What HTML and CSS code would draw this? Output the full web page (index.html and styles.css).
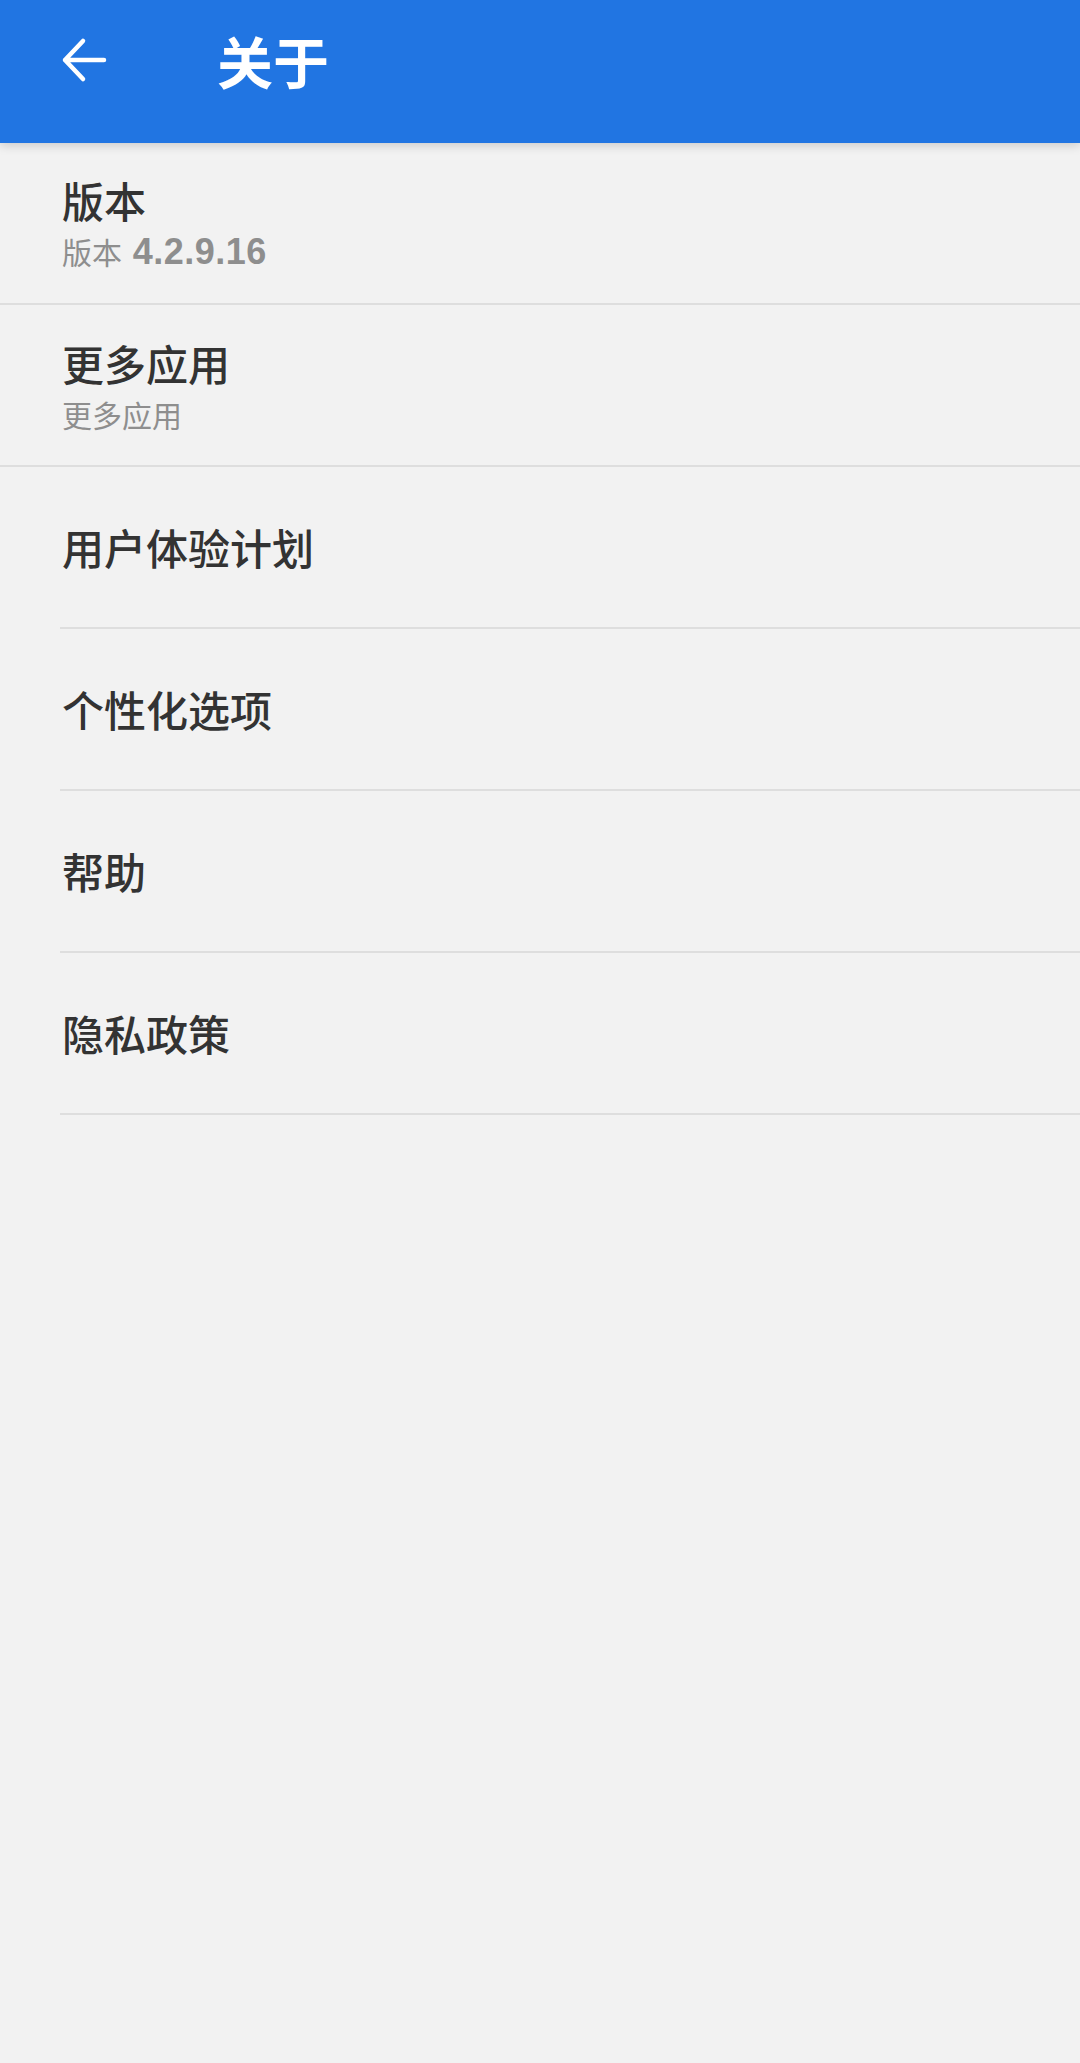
FILE: index.html
```html
<!DOCTYPE html>
<html lang="zh-CN">
<head>
  <meta charset="UTF-8" />
  <meta name="viewport" content="width=device-width, initial-scale=1" />
  <title>关于</title>
  <link rel="stylesheet" href="styles.css">
</head>
<body>
  <header class="appbar">
    <button class="back" aria-label="返回">
      <svg width="48" height="48" viewBox="0 0 48 48">
        <path d="M6 24 H45 M24 5 L6 24 L24 43" fill="none" stroke="#fff" stroke-width="4.5" stroke-linecap="round" stroke-linejoin="round"/>
      </svg>
    </button>
    <h1>关于</h1>
  </header>

  <ul class="list">
    <li class="item full">
      <div class="title">版本</div>
      <div class="sub">版本 <b>4.2.9.16</b></div>
    </li>
    <li class="item full">
      <div class="title">更多应用</div>
      <div class="sub">更多应用</div>
    </li>
    <li class="item">
      <div class="title">用户体验计划</div>
    </li>
    <li class="item">
      <div class="title">个性化选项</div>
    </li>
    <li class="item">
      <div class="title">帮助</div>
    </li>
    <li class="item">
      <div class="title">隐私政策</div>
    </li>
  </ul>
</body>
</html>
```

FILE: styles.css
```css
body {
  margin: 0;
  min-height: 2063px;
  background: #f2f2f2;
  font-family: "Noto Sans CJK SC", "Noto Sans", sans-serif;
  color: #333;
}
.appbar {
  display: flex;
  align-items: center;
  height: 143px;
  background: #2175e2;
  box-shadow: 0 2px 10px rgba(0, 0, 0, 0.18);
}
.back {
  display: flex;
  margin: 0 0 0 59px;
  padding: 0;
  border: 0;
  background: none;
  height: 48px;
  width: 48px;
  margin-top: -24px;
}
.appbar h1 {
  margin: -24px 0 0 110px;
  font-size: 56px;
  font-weight: bold;
  color: #fff;
}
.list {
  list-style: none;
  margin: 0;
  padding: 0;
}
.item {
  display: flex;
  flex-direction: column;
  justify-content: center;
  height: 160px;
  margin-left: 60px;
  padding-left: 2px;
  border-bottom: 2px solid #dedede;
}
.item.full {
  margin-left: 0;
  padding-left: 62px;
}
.title {
  font-size: 42px;
  line-height: 48px;
  font-weight: 500;
}
.sub {
  margin-top: 9px;
  font-size: 30px;
  line-height: 36px;
  color: #8e8e8e;
}
.sub b {
  margin-left: 4px;
  font-family: "Liberation Sans", Arial, sans-serif;
  font-size: 36px;
  font-weight: bold;
  letter-spacing: 0.5px;
}
```
